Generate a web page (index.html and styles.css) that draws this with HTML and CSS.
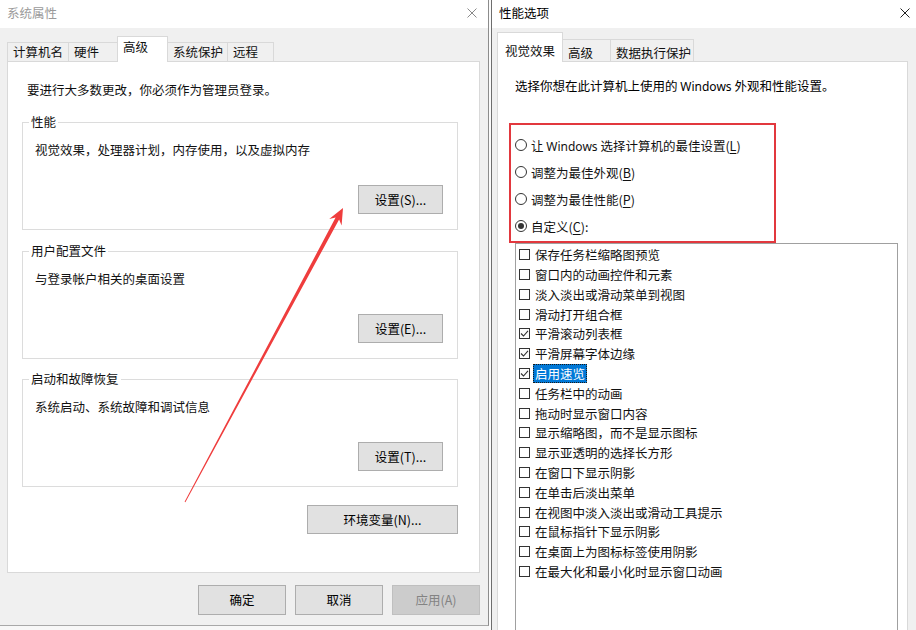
FILE: index.html
```html
<!DOCTYPE html>
<html lang="zh-CN">
<head>
<meta charset="utf-8">
<title>系统属性 / 性能选项</title>
<link rel="stylesheet" href="styles.css">
</head>
<body>
<div class="desk">
  <section class="win win-sys">
    <header class="titlebar">
      <span class="title">系统属性</span>
      <svg class="close" viewBox="0 0 10 10"><path d="M0.5 0.5L9.5 9.5M9.5 0.5L0.5 9.5"/></svg>
    </header>
    <div class="client">
      <nav class="tabs">
        <span class="tab w62">计算机名</span>
        <span class="tab w50">硬件</span>
        <span class="tab sel w51">高级</span>
        <span class="tab w61">系统保护</span>
        <span class="tab w47">远程</span>
      </nav>
      <div class="panel">
        <p class="note">要进行大多数更改，你必须作为管理员登录。</p>
        <div class="group g1">
          <span class="legend">性能</span>
          <p class="desc">视觉效果，处理器计划，内存使用，以及虚拟内存</p>
          <button class="btn gbtn">设置(S)...</button>
        </div>
        <div class="group g2">
          <span class="legend">用户配置文件</span>
          <p class="desc">与登录帐户相关的桌面设置</p>
          <button class="btn gbtn">设置(E)...</button>
        </div>
        <div class="group g3">
          <span class="legend">启动和故障恢复</span>
          <p class="desc">系统启动、系统故障和调试信息</p>
          <button class="btn gbtn">设置(T)...</button>
        </div>
        <button class="btn envbtn">环境变量(N)...</button>
      </div>
      <div class="dlg-buttons">
        <button class="btn dbtn">确定</button>
        <button class="btn dbtn">取消</button>
        <button class="btn dbtn disabled">应用(A)</button>
      </div>
    </div>
  </section>
  <div class="gap"></div>
  <section class="win win-perf">
    <header class="titlebar">
      <span class="title">性能选项</span>
      <svg class="close" viewBox="0 0 10 10"><path d="M0.5 0.5L9.5 9.5M9.5 0.5L0.5 9.5"/></svg>
    </header>
    <div class="client">
      <nav class="tabs">
        <span class="tab sel w66">视觉效果</span>
        <span class="tab w49">高级</span>
        <span class="tab w84">数据执行保护</span>
      </nav>
      <div class="panel">
        <p class="intro">选择你想在此计算机上使用的 <span class="latin">Windows</span> 外观和性能设置。</p>
        <div class="radios">
          <div class="radio"><svg viewBox="0 0 12 12"><circle cx="6" cy="6" r="5.5"/></svg><span>让 <span class="latin">Windows</span> 选择计算机的最佳设置(<u>L</u>)</span></div>
          <div class="radio"><svg viewBox="0 0 12 12"><circle cx="6" cy="6" r="5.5"/></svg><span>调整为最佳外观(<u>B</u>)</span></div>
          <div class="radio"><svg viewBox="0 0 12 12"><circle cx="6" cy="6" r="5.5"/></svg><span>调整为最佳性能(<u>P</u>)</span></div>
          <div class="radio"><svg viewBox="0 0 12 12"><circle cx="6" cy="6" r="5.5"/><circle class="dot" cx="6" cy="6" r="3"/></svg><span>自定义(<u>C</u>):</span></div>
        </div>
        <div class="list">
          <div class="item"><svg class="cb" viewBox="0 0 11 11"><rect x="0.5" y="0.5" width="10" height="10"/></svg><span>保存任务栏缩略图预览</span></div>
          <div class="item"><svg class="cb" viewBox="0 0 11 11"><rect x="0.5" y="0.5" width="10" height="10"/></svg><span>窗口内的动画控件和元素</span></div>
          <div class="item"><svg class="cb" viewBox="0 0 11 11"><rect x="0.5" y="0.5" width="10" height="10"/></svg><span>淡入淡出或滑动菜单到视图</span></div>
          <div class="item"><svg class="cb" viewBox="0 0 11 11"><rect x="0.5" y="0.5" width="10" height="10"/></svg><span>滑动打开组合框</span></div>
          <div class="item"><svg class="cb" viewBox="0 0 11 11"><rect x="0.5" y="0.5" width="10" height="10"/><path d="M2 5.5L4.5 8L9 2.8"/></svg><span>平滑滚动列表框</span></div>
          <div class="item"><svg class="cb" viewBox="0 0 11 11"><rect x="0.5" y="0.5" width="10" height="10"/><path d="M2 5.5L4.5 8L9 2.8"/></svg><span>平滑屏幕字体边缘</span></div>
          <div class="item"><svg class="cb" viewBox="0 0 11 11"><rect x="0.5" y="0.5" width="10" height="10"/><path d="M2 5.5L4.5 8L9 2.8"/></svg><span class="hl">启用速览</span></div>
          <div class="item"><svg class="cb" viewBox="0 0 11 11"><rect x="0.5" y="0.5" width="10" height="10"/></svg><span>任务栏中的动画</span></div>
          <div class="item"><svg class="cb" viewBox="0 0 11 11"><rect x="0.5" y="0.5" width="10" height="10"/></svg><span>拖动时显示窗口内容</span></div>
          <div class="item"><svg class="cb" viewBox="0 0 11 11"><rect x="0.5" y="0.5" width="10" height="10"/></svg><span>显示缩略图，而不是显示图标</span></div>
          <div class="item"><svg class="cb" viewBox="0 0 11 11"><rect x="0.5" y="0.5" width="10" height="10"/></svg><span>显示亚透明的选择长方形</span></div>
          <div class="item"><svg class="cb" viewBox="0 0 11 11"><rect x="0.5" y="0.5" width="10" height="10"/></svg><span>在窗口下显示阴影</span></div>
          <div class="item"><svg class="cb" viewBox="0 0 11 11"><rect x="0.5" y="0.5" width="10" height="10"/></svg><span>在单击后淡出菜单</span></div>
          <div class="item"><svg class="cb" viewBox="0 0 11 11"><rect x="0.5" y="0.5" width="10" height="10"/></svg><span>在视图中淡入淡出或滑动工具提示</span></div>
          <div class="item"><svg class="cb" viewBox="0 0 11 11"><rect x="0.5" y="0.5" width="10" height="10"/></svg><span>在鼠标指针下显示阴影</span></div>
          <div class="item"><svg class="cb" viewBox="0 0 11 11"><rect x="0.5" y="0.5" width="10" height="10"/></svg><span>在桌面上为图标标签使用阴影</span></div>
          <div class="item"><svg class="cb" viewBox="0 0 11 11"><rect x="0.5" y="0.5" width="10" height="10"/></svg><span>在最大化和最小化时显示窗口动画</span></div>
        </div>
      </div>
    </div>
  </section>
  <svg class="arrow" viewBox="0 0 916 630" width="916" height="630">
    <polygon points="343,208 341.6,225.4 339.1,219.5 185.4,502.2 184.6,501.8 335.6,217.6 329.2,219.1"/>
  </svg>
</div>
</body>
</html>
```

FILE: styles.css
```css
* { box-sizing: border-box; }
html, body { margin: 0; padding: 0; }
body {
  width: 916px;
  height: 630px;
  overflow: hidden;
  font-family: "Noto Sans CJK SC", "Noto Sans", sans-serif;
  font-size: 12.5px;
  color: #111;
  background: #f7f7f7;
}
p { margin: 0; }
.latin { font-family: "Noto Sans", "Noto Sans CJK SC", sans-serif; font-size: 12px; line-height: 1; }

.desk { position: relative; display: flex; height: 630px; }

.win { display: flex; flex-direction: column; overflow: hidden; background: #f0f0f0; }
.win-sys { width: 489px; height: 626px; border-right: 1px solid #8c8c8c; border-bottom: 1px solid #a8a8a8; }
.gap { width: 2px; background: #fbfbfb; }
.win-perf { flex: 1; height: 630px; border-left: 1px solid #6e6e6e; }

.titlebar {
  height: 28px; flex: none; background: #fff;
  display: flex; align-items: center; justify-content: space-between;
  padding-bottom: 3px;
}
.win-sys .titlebar { padding-left: 7px; padding-right: 11px; color: #9a9a9a; }
.win-perf .titlebar { padding-left: 7px; padding-right: 6px; color: #000; }
.close { width: 10px; height: 10px; display: block; fill: none; stroke-width: 1; }
.win-sys .close { stroke: #8a8a8a; }
.win-perf .close { stroke: #222; }

.client { display: flex; flex-direction: column; flex: 1; }

.tabs { display: flex; align-items: flex-end; height: 33px; flex: none; }
.win-sys .tabs { padding-left: 7px; }
.win-perf .tabs { padding-left: 5px; }
.tab {
  border: 1px solid #d9d9d9; border-bottom: none; background: #f0f0f0;
  padding-left: 5px; line-height: 18px; height: 19px; white-space: nowrap; color: #111;
}
.tab + .tab { margin-left: -1px; }
.tab.sel { background: #fff; height: 26px; margin-bottom: -1px; position: relative; z-index: 1; padding-top: 1px; }
.win-perf .tab { height: 22px; padding-top: 4px; }
.win-perf .tab.sel { height: 30px; padding-top: 9px; padding-left: 7px; }

.w62 { width: 62px; } .w50 { width: 50px; } .w51 { width: 51px; } .w61 { width: 61px; } .w47 { width: 47px; }
.w66 { width: 66px; } .w49 { width: 49px; } .w84 { width: 84px; }

.panel { background: #fff; border: 1px solid #d9d9d9; display: flex; flex-direction: column; flex: none; }
.win-sys .panel { margin-left: 7px; width: 473px; height: 512px; padding-top: 18px; }
.win-perf .panel { margin-left: 5px; width: 411px; height: 600px; padding-top: 14px; }

.note { line-height: 20px; margin-left: 19px; }

.group {
  margin: 22px 0 0 14px; width: 436px; height: 108px;
  border: 1px solid #dcdcdc; display: flex; flex-direction: column;
}
.group.g2 { margin-top: 21px; }
.group.g3 { margin-top: 20px; }
.legend {
  align-self: flex-start; margin: -10px 0 0 6px; padding: 0 2px;
  line-height: 18px; background: #fff;
}
.desc { margin: 10px 0 0 12px; line-height: 18px; }

.btn {
  font: inherit; color: #000; background: #e1e1e1; border: 1px solid #adadad;
  padding: 0; margin: 0; display: flex; align-items: center; justify-content: center;
  line-height: 18px;
}
.gbtn { align-self: flex-end; margin: 26px 14px 0 0; width: 85px; height: 29px; }
.envbtn { align-self: flex-end; margin: 18px 21px 0 0; width: 151px; height: 29px; }

.dlg-buttons { display: flex; justify-content: flex-end; gap: 9px; padding-right: 8px; margin-top: 12px; }
.dbtn { width: 88px; height: 30px; }
.dbtn.disabled { background: #cccccc; border-color: #bfbfbf; color: #838383; }

.intro { line-height: 20px; height: 20px; margin-left: 17px; color: #000; overflow: hidden; }

.radios {
  margin: 27px 0 0 11px; width: 267px;
  border: 2px solid #e2383e; padding: 7px 0 1px 4px;
}
.radio { display: flex; align-items: center; gap: 4px; height: 27px; color: #111; }
.radio svg { width: 12px; height: 12px; flex: none; fill: #fff; stroke: #333; stroke-width: 1; }
.radio svg .dot { fill: #333; stroke: none; }
.radio u { text-decoration-thickness: 1px; text-underline-offset: 2px; }

.list {
  margin-left: 17px; width: 383px; height: 420px;
  border: 1px solid #a0a0a0; padding: 1px 0 0 3px; background: #fff;
}
.item { display: flex; align-items: center; gap: 5px; height: 19.8px; white-space: nowrap; color: #111; }
.cb { width: 11px; height: 11px; flex: none; fill: #fff; stroke: #333; stroke-width: 1; }
.cb path { fill: none; stroke: #333; stroke-width: 1.1; }
.hl {
  background: #0078d7; color: #fff; line-height: 19px;
  margin-left: -2px; padding: 0 2px; outline: 1px dotted #1a1a1a; outline-offset: -1px;
}

.arrow { position: absolute; left: 0; top: 0; pointer-events: none; }
.arrow polygon { fill: #ef3d3d; }
```
